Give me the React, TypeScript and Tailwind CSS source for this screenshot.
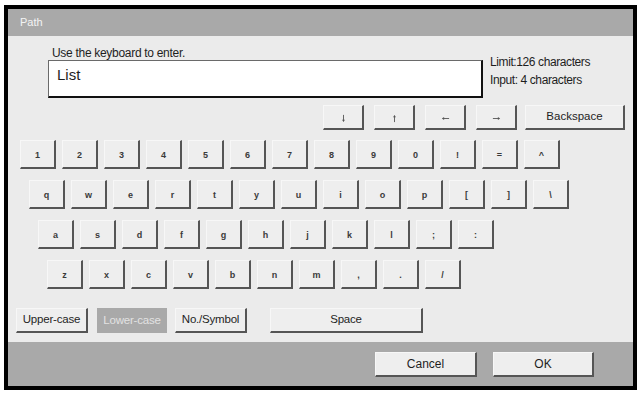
import type { ReactNode } from 'react';

const rows: { pad: string; keys: string[] }[] = [
  { pad: 'pl-[12px]', keys: ['1', '2', '3', '4', '5', '6', '7', '8', '9', '0', '!', '=', '^'] },
  { pad: 'pl-[21px]', keys: ['q', 'w', 'e', 'r', 't', 'y', 'u', 'i', 'o', 'p', '[', ']', '\\'] },
  { pad: 'pl-[30px]', keys: ['a', 's', 'd', 'f', 'g', 'h', 'j', 'k', 'l', ';', ':'] },
  { pad: 'pl-[39px]', keys: ['z', 'x', 'c', 'v', 'b', 'n', 'm', ',', '.', '/'] },
];

function Key({ className, children }: { className: string; children: ReactNode }) {
  return (
    <div
      className={`flex items-center justify-center bg-[#eeeeee] border-t border-l border-t-[#f7f7f7] border-l-[#f7f7f7] border-r-2 border-b-2 border-r-[#555] border-b-[#555] ${className}`}
    >
      {children}
    </div>
  );
}

// thin arrow, drawn pointing right and rotated
function Arrow({ rotate }: { rotate: string }) {
  return (
    <svg width="9" height="9" viewBox="0 0 10 10" className={`mt-[2px] ${rotate}`}>
      <path d="M1 5H8" stroke="#555" strokeWidth="1" />
      <path d="M6.5 3.4L9 5L6.5 6.6Z" fill="#555" />
    </svg>
  );
}

export default function App() {
  return (
    <div className="w-[643px] h-[393px] bg-white pt-[5px] pl-[4px] font-['Liberation_Sans',Arial,sans-serif] text-[#1e1e1e]">
      <div className="w-[633px] h-[385px] border-4 border-black flex flex-col bg-[#ebebeb]">
        {/* title */}
        <div className="h-[27px] shrink-0 bg-[#a9a9a9] flex items-center pl-[12px] text-[11px] text-[#f4f4f4]">
          Path
        </div>

        {/* body */}
        <div className="h-[306px] shrink-0 flex flex-col">
          <div className="flex items-start pt-[11px] pl-[40px]">
            <div className="flex flex-col">
              <div className="pl-[4px] text-[12px] leading-[12px] tracking-[-0.3px]">Use the keyboard to enter.</div>
              <div className="mt-[1px] w-[435px] h-[38px] bg-white border-t border-l border-[#6a6a6a] border-r-2 border-b-2 border-r-[#111] border-b-[#111] pl-[8px] pt-[4px] text-[15px] leading-[20px]">
                List
              </div>
            </div>
            <div className="ml-[7px] pt-[6px] text-[12px] leading-[18px] tracking-[-0.4px]">
              <div>Limit:126 characters</div>
              <div>Input: 4 characters</div>
            </div>
          </div>

          <div className="mt-[7px] flex pl-[315px]">
            <Key className="w-[41px] h-[25px]"><Arrow rotate="rotate-90" /></Key>
            <Key className="ml-[10px] w-[41px] h-[25px]"><Arrow rotate="-rotate-90" /></Key>
            <Key className="ml-[10px] w-[41px] h-[25px]"><Arrow rotate="rotate-180" /></Key>
            <Key className="ml-[10px] w-[41px] h-[25px]"><Arrow rotate="rotate-0" /></Key>
            <Key className="ml-[8px] w-[100px] h-[25px] text-[11.5px]">Backspace</Key>
          </div>

          <div className="mt-[10px] flex flex-col gap-[11px]">
            {rows.map((row) => (
              <div key={row.keys[0]} className={`flex gap-[6px] ${row.pad}`}>
                {row.keys.map((k) => (
                  <Key key={k} className="w-[36px] h-[29px] pt-[3px] text-[9px] font-bold text-[#3a3a3a]">
                    {k}
                  </Key>
                ))}
              </div>
            ))}
          </div>

          <div className="mt-[19px] flex items-start pl-[8px] text-[11.5px] tracking-[-0.2px]">
            <Key className="w-[72px] h-[25px]">Upper-case</Key>
            <div className="ml-[9px] w-[70px] h-[25px] flex items-center justify-center bg-[#a9a9a9] text-[#e2e2e2]">
              Lower-case
            </div>
            <Key className="ml-[8px] w-[72px] h-[25px]">No./Symbol</Key>
            <Key className="ml-[23px] w-[153px] h-[25px]">Space</Key>
          </div>
        </div>

        {/* footer */}
        <div className="flex-1 bg-[#a9a9a9] flex items-start justify-end pt-[10px] pr-[39px] gap-[16px] text-[12px]">
          <Key className="w-[102px] h-[25px]">Cancel</Key>
          <Key className="w-[101px] h-[25px]">OK</Key>
        </div>
      </div>
    </div>
  );
}
